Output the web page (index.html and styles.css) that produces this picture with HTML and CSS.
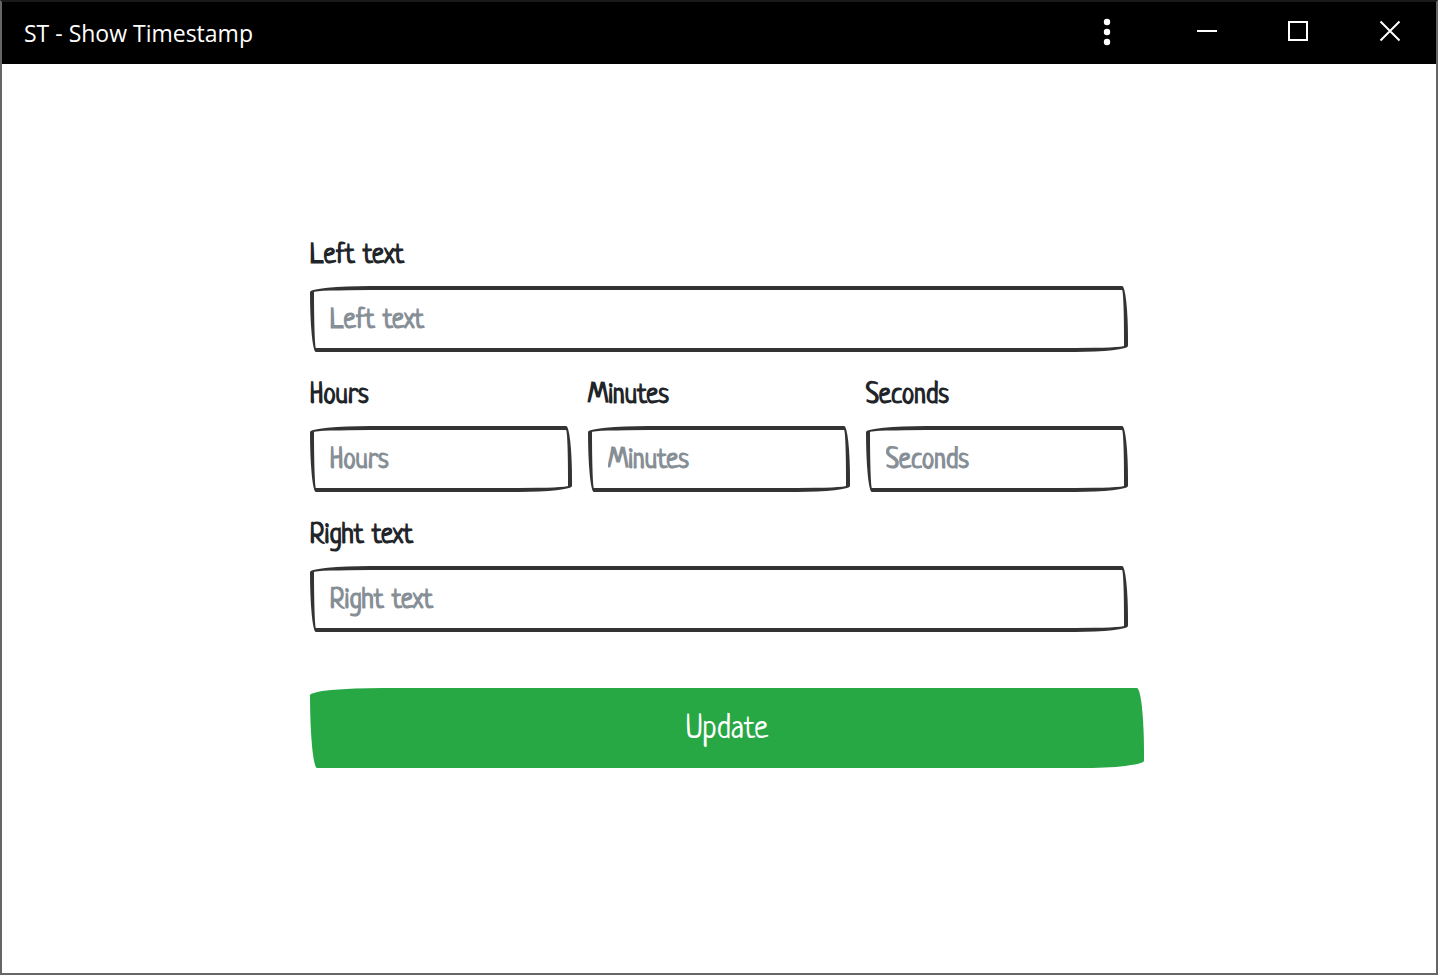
FILE: index.html
```html
<!DOCTYPE html>
<html lang="en">
<head>
<meta charset="utf-8">
<title>ST - Show Timestamp</title>
<link rel="stylesheet" href="styles.css">
</head>
<body>
<div class="window">
  <header class="titlebar">
    <h1 class="title">ST - Show Timestamp</h1>
    <div class="controls">
      <button class="control menu" type="button" aria-label="Menu">
        <svg width="8" height="28" viewBox="0 0 8 28" fill="currentColor"><circle cx="4" cy="4" r="3.200"/><circle cx="4" cy="14" r="3.200"/><circle cx="4" cy="24" r="3.200"/></svg>
      </button>
      <button class="control minimize" type="button" aria-label="Minimize">
        <svg width="22" height="22" viewBox="0 0 22 22" stroke="currentColor" stroke-width="2" fill="none"><path d="M1 11h20"/></svg>
      </button>
      <button class="control" type="button" aria-label="Maximize">
        <svg width="22" height="22" viewBox="0 0 22 22" stroke="currentColor" stroke-width="2" fill="none"><path d="M2 2h18v18H2z"/></svg>
      </button>
      <button class="control" type="button" aria-label="Close">
        <svg width="22" height="22" viewBox="0 0 22 22" stroke="currentColor" stroke-width="2" fill="none"><path d="M1.500 1.500l19 19M20.500 1.500l-19 19"/></svg>
      </button>
    </div>
  </header>
  <main class="content">
    <form class="form">
      <div class="field">
        <label for="left">Left text</label>
        <input id="left" type="text" placeholder="Left text">
      </div>
      <div class="row">
        <div class="field">
          <label for="hours">Hours</label>
          <input id="hours" type="text" placeholder="Hours">
        </div>
        <div class="field">
          <label for="minutes">Minutes</label>
          <input id="minutes" type="text" placeholder="Minutes">
        </div>
        <div class="field">
          <label for="seconds">Seconds</label>
          <input id="seconds" type="text" placeholder="Seconds">
        </div>
      </div>
      <div class="field">
        <label for="right">Right text</label>
        <input id="right" type="text" placeholder="Right text">
      </div>
      <button class="update" type="button">Update</button>
    </form>
  </main>
</div>
</body>
</html>
```
FILE: styles.css
```css
* {
  box-sizing: border-box;
}

body {
  margin: 0;
  background: #fff;
  color: #212529;
  font-family: Neucha, "Liberation Sans Narrow", "Liberation Sans", sans-serif;
}

.window {
  display: flex;
  flex-direction: column;
  min-height: 100vh;
  border: 2px solid #666;
  border-top-color: #1a1a1a;
}

.titlebar {
  display: flex;
  justify-content: space-between;
  align-items: center;
  height: 62px;
  padding-left: 22px;
  background: #000;
  color: #fff;
}

.title {
  margin: 0;
  font: 400 23px/32px "Segoe UI", "Open Sans", "Noto Sans", sans-serif;
}

.controls {
  display: flex;
  align-self: stretch;
}

.control {
  display: flex;
  align-items: center;
  justify-content: center;
  width: 92px;
  padding: 0 0 4px;
  border: 0;
  background: none;
  color: inherit;
}

.menu {
  width: 110px;
  padding-bottom: 2px;
}

.minimize {
  width: 90px;
}

.content {
  display: flex;
  justify-content: center;
  padding: 174px 24px 48px;
}

.form {
  display: flex;
  flex-direction: column;
  gap: 26px;
  width: 100%;
  max-width: 818px;
}

.row {
  display: flex;
  gap: 16px;
}

.field {
  display: flex;
  flex: 1;
  flex-direction: column;
  gap: 12px;
  min-width: 0;
}

label {
  font-size: 28px;
  font-weight: 700;
  line-height: 36px;
}

input {
  width: 100%;
  height: 66px;
  padding: 4px 16px 0;
  border: 4px solid #333;
  border-radius: 255px 25px 225px 25px / 25px 225px 25px 255px;
  background: #fff;
  color: #495057;
  font: inherit;
  font-size: 28px;
  font-weight: 700;
}

input::placeholder {
  color: #868e96;
  opacity: 1;
}

.update {
  width: calc(100% + 16px);
  height: 80px;
  margin-top: 30px;
  padding: 4px 16px 0;
  border: 0;
  border-radius: 255px 25px 225px 25px / 25px 225px 25px 255px;
  background: #28a745;
  color: #fff;
  font: inherit;
  font-size: 32px;
}
```
